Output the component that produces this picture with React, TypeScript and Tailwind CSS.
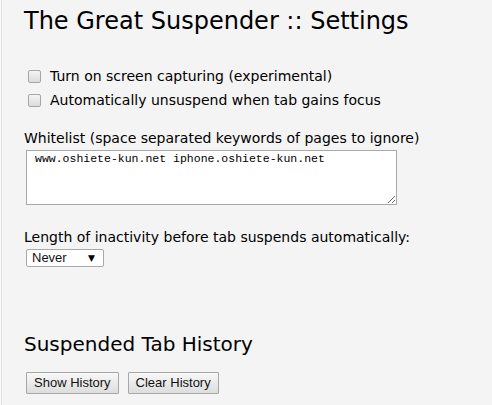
const verdana = "font-['Verdana','DejaVu_Sans',sans-serif]";
const arial = "font-['Liberation_Sans',Arial,sans-serif]";

function Check({ label }: { label: string }) {
  return (
    <label className="flex h-[24px] items-center gap-[9px] pl-[4px] text-[14px]">
      <span className="h-[13px] w-[13px] rounded-[2px] border border-[#a6a6a6] bg-gradient-to-b from-[#f4f4f4] to-[#dcdcdc]" />
      {label}
    </label>
  );
}

function Button({ children }: { children: string }) {
  return (
    <button
      className={`h-[22px] rounded-[1px] border border-[#a7a7a7] bg-gradient-to-b from-[#f8f8f8] to-[#dddddd] px-[7px] text-[13px] text-[#111] ${arial}`}
    >
      {children}
    </button>
  );
}

export default function App() {
  return (
    <div className={`min-h-screen border-l border-l-[#f9f9f9] bg-[#f4f4f4] text-black ${verdana}`}>
      <div className="min-h-screen border-l border-l-[#e2e2e2] pl-[22px] pt-[5px]">
        <h1 className="text-[24px] leading-[32px]">The Great Suspender :: Settings</h1>

        <div className="mt-[27px] flex flex-col">
          <Check label="Turn on screen capturing (experimental)" />
          <Check label="Automatically unsuspend when tab gains focus" />
        </div>

        <div className="mt-[17px] text-[14px] leading-[18px]">
          Whitelist (space separated keywords of pages to ignore)
        </div>
        <textarea
          defaultValue="www.oshiete-kun.net iphone.oshiete-kun.net"
          className="ml-[2px] mt-[3px] block h-[55px] w-[371px] border border-[#a9a9a9] bg-white px-[8px] py-[1px] font-['Liberation_Mono',monospace] text-[11.5px] leading-[14px] text-black outline-none"
        />

        <div className="mt-[23px] text-[14px] leading-[18px]">
          Length of inactivity before tab suspends automatically:
        </div>
        <div className="ml-[2px] mt-[3px] flex h-[18px] w-[78px] items-center justify-between rounded-[2px] border border-[#a9a9a9] bg-white pl-[5px] pr-[8px]">
          <span className={`text-[13px] text-[#111] ${arial}`}>Never</span>
          <span className="text-[9px] leading-none">▼</span>
        </div>

        <h2 className="mt-[65px] text-[20px] leading-[24px]">Suspended Tab History</h2>

        <div className="ml-[2px] mt-[16px] flex gap-[9px]">
          <Button>Show History</Button>
          <Button>Clear History</Button>
        </div>
      </div>
    </div>
  );
}
